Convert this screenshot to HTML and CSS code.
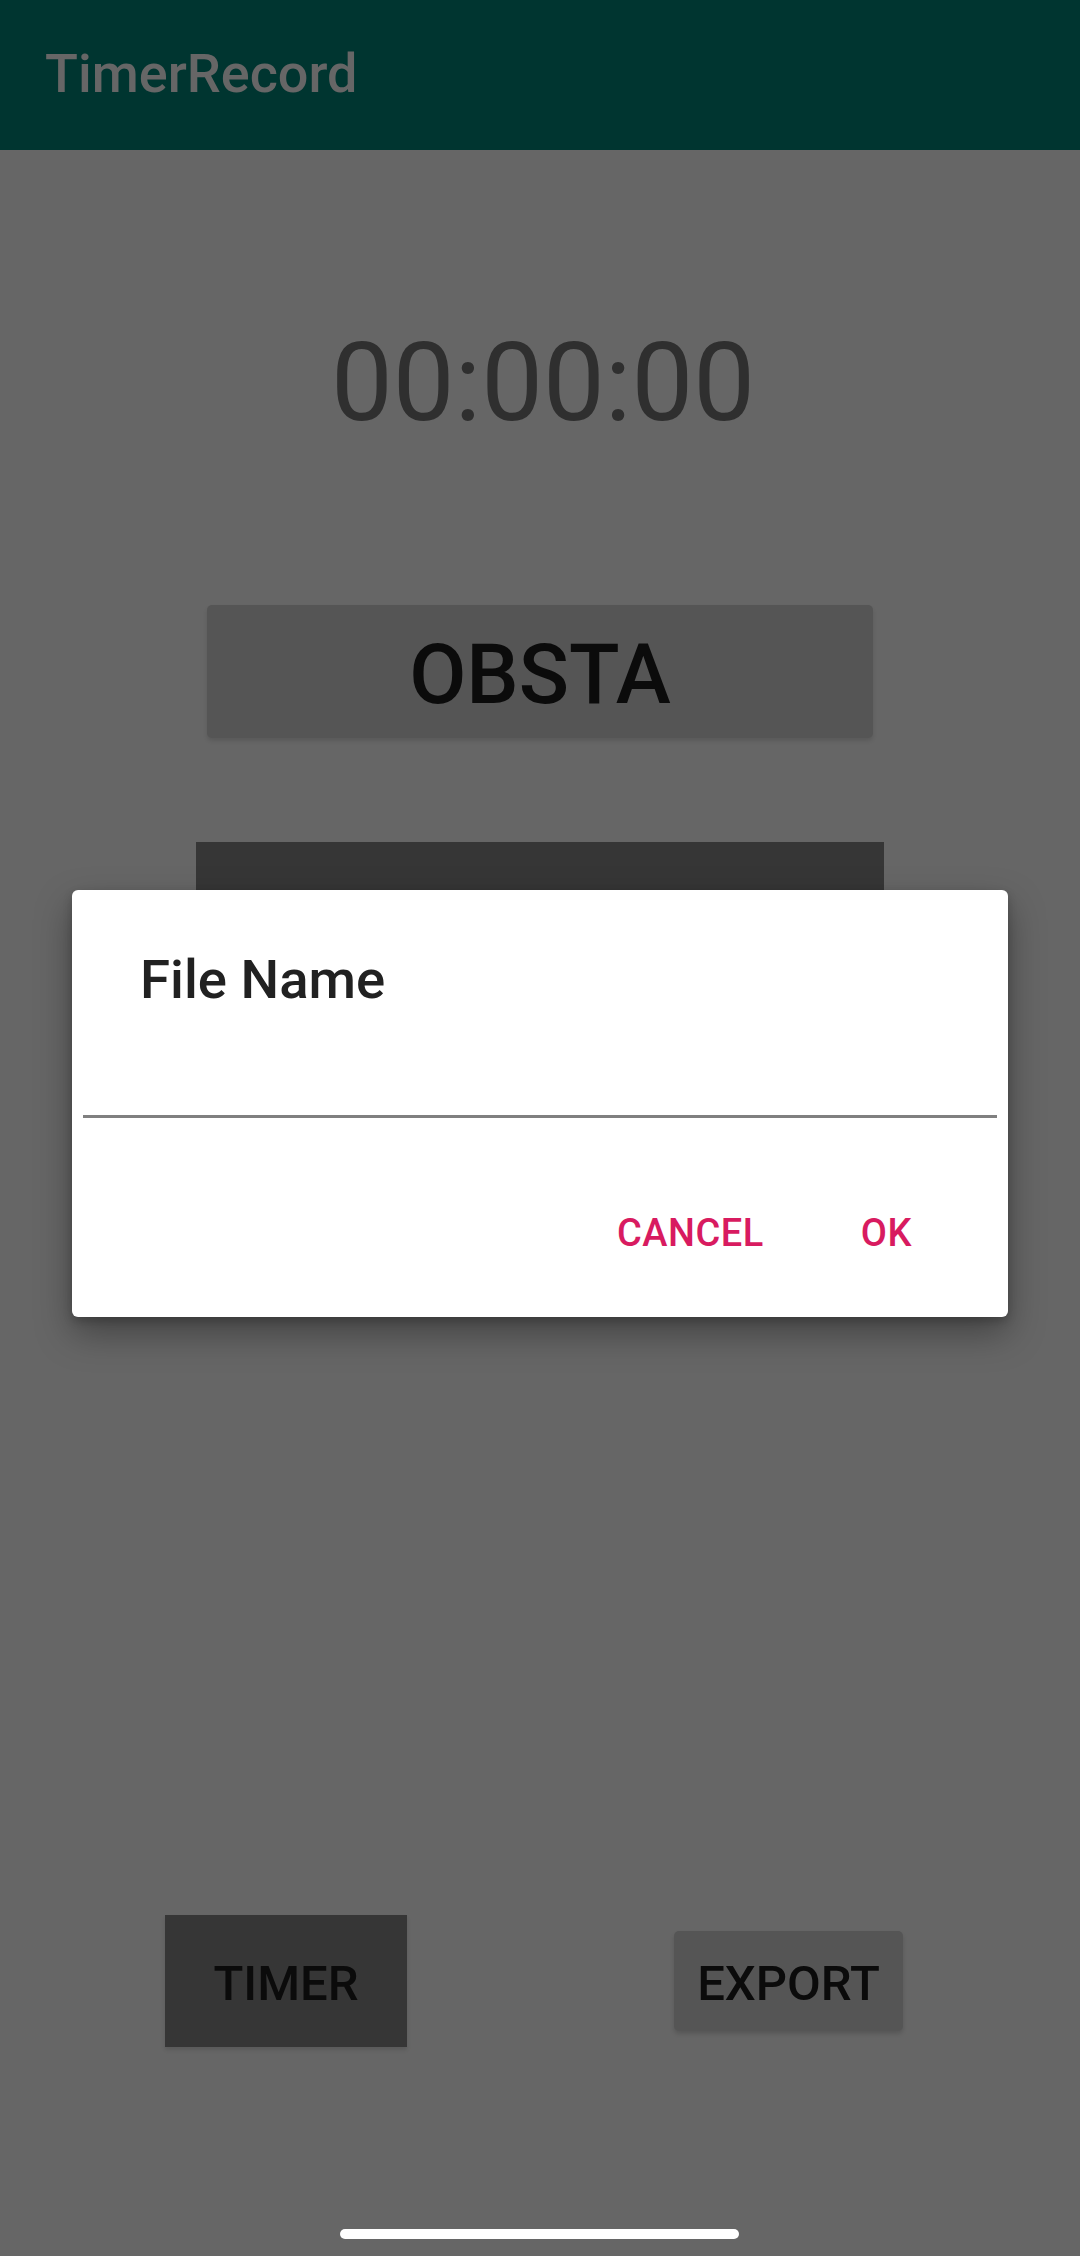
FILE: index.html
```html
<!DOCTYPE html>
<html>
<head>
<meta charset="utf-8">
<link rel="stylesheet" href="styles.css">
</head>
<body>
<div class="screen">
  <header class="toolbar"><span class="title">TimerRecord</span></header>
  <main class="content">
    <div class="timer">00:00:00</div>
    <div class="obsta">OBSTA</div>
    <div class="darkbar"></div>
    <div class="spacer"></div>
    <div class="bottom">
      <div class="btn-timer">TIMER</div>
      <div class="btn-export">EXPORT</div>
    </div>
  </main>
  <div class="navpill"></div>
  <div class="dialog">
    <div class="dlg-title">File Name</div>
    <div class="dlg-input"></div>
    <div class="dlg-actions">
      <span class="dlg-btn">CANCEL</span>
      <span class="dlg-btn">OK</span>
    </div>
  </div>
</div>
</body>
</html>
```
FILE: styles.css
```css
html, body {
  margin: 0;
  padding: 0;
}
body {
  width: 1080px;
  height: 2256px;
  background: #666666;
  font-family: Roboto, "Noto Sans", sans-serif;
  overflow: hidden;
}
.screen {
  position: relative;
  width: 1080px;
  height: 2256px;
  display: flex;
  flex-direction: column;
}
.toolbar {
  height: 150px;
  background: #003530;
  box-sizing: border-box;
  padding: 47px 0 0 45px;
}
.title {
  display: block;
  font-size: 54px;
  line-height: 1;
  font-weight: 500;
  color: #666666;
}
.content {
  flex: 1;
  display: flex;
  flex-direction: column;
  align-items: center;
}
.timer {
  margin-top: 178px;
  margin-left: 6px;
  font-size: 110px;
  line-height: 1;
  color: #2f2f2f;
}
.obsta {
  margin-top: 167px;
  width: 666px;
  height: 133px;
  background: #555555;
  border-radius: 5px;
  box-shadow: 0 3px 4px rgba(0,0,0,0.12);
  display: flex;
  align-items: center;
  justify-content: center;
  padding-top: 6px;
  box-sizing: border-box;
  font-size: 83px;
  font-weight: 500;
  color: #0b0b0b;
  line-height: 1;
}
.darkbar {
  margin-top: 104px;
  width: 688px;
  height: 160px;
  background: #363636;
}
.spacer {
  flex: 1;
}
.bottom {
  width: 100%;
  height: 150px;
  margin-bottom: 191px;
  display: flex;
  align-items: flex-start;
}
.btn-timer {
  margin-left: 165px;
  width: 242px;
  height: 132px;
  background: #363636;
  box-shadow: 0 3px 4px rgba(0,0,0,0.12);
  display: flex;
  align-items: center;
  justify-content: center;
  font-size: 49px;
  font-weight: 500;
  color: #0b0b0b;
  line-height: 1;
  padding-top: 5px;
  box-sizing: border-box;
}
.btn-export {
  margin-left: 267px;
  margin-top: 16px;
  width: 229px;
  height: 100px;
  background: #555555;
  border-radius: 5px;
  box-shadow: 0 3px 4px rgba(0,0,0,0.15);
  display: flex;
  align-items: center;
  justify-content: center;
  font-size: 49px;
  font-weight: 500;
  color: #0b0b0b;
  line-height: 1;
  padding-top: 5px;
  box-sizing: border-box;
}
.navpill {
  position: absolute;
  left: 340px;
  top: 2229px;
  width: 399px;
  height: 10px;
  border-radius: 5px;
  background: #ffffff;
}
.dialog {
  position: absolute;
  left: 72px;
  top: 890px;
  width: 936px;
  height: 427px;
  background: #ffffff;
  border-radius: 6px;
  box-shadow: 0 16px 36px rgba(0,0,0,0.35), 0 4px 10px rgba(0,0,0,0.2);
  box-sizing: border-box;
  display: flex;
  flex-direction: column;
}
.dlg-title {
  margin: 62px 0 0 68px;
  font-size: 54.5px;
  line-height: 1;
  font-weight: 500;
  color: #212121;
}
.dlg-input {
  margin: 108px 11px 0 11px;
  height: 3px;
  background: #808080;
}
.dlg-actions {
  margin-top: 96px;
  display: flex;
  justify-content: flex-end;
  gap: 97px;
  padding-right: 96px;
}
.dlg-btn {
  font-size: 38px;
  line-height: 1;
  font-weight: 500;
  color: #d81b60;
  letter-spacing: 0.5px;
}
```
